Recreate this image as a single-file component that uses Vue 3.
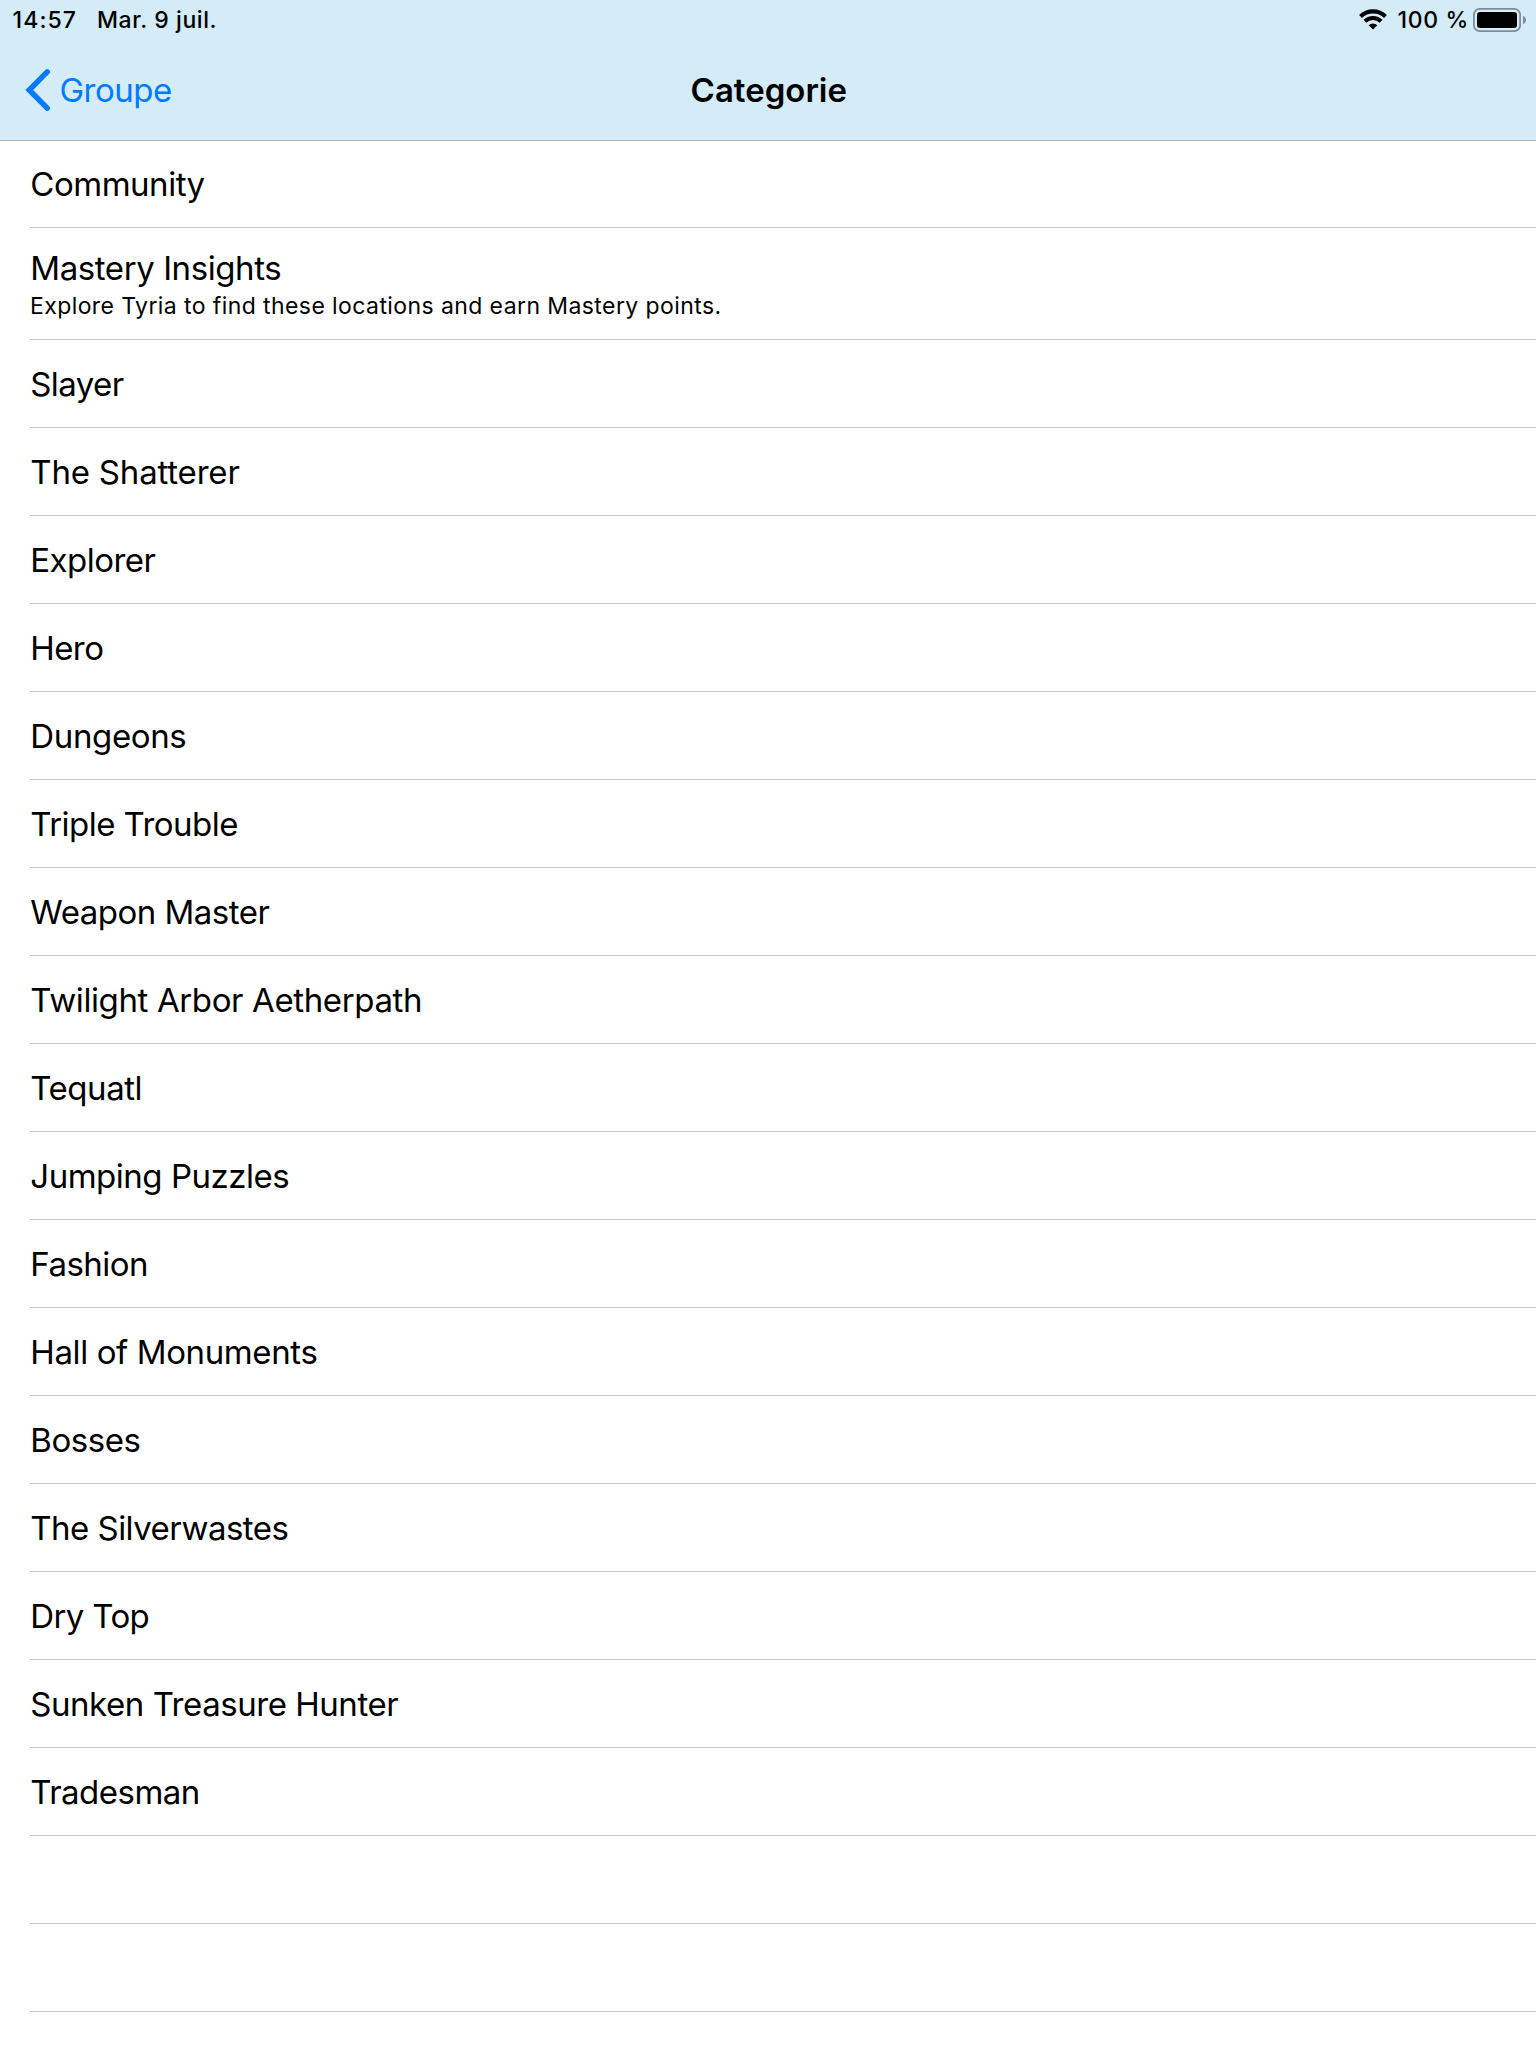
<script setup>
// Each category carries its own optical tracking, in pixels.
const categories = [
  { name: 'Community', tracking: -0.48 },
  {
    name: 'Mastery Insights',
    tracking: -0.42,
    description: 'Explore Tyria to find these locations and earn Mastery points.',
  },
  { name: 'Slayer', tracking: -0.6 },
  { name: 'The Shatterer', tracking: -0.19 },
  { name: 'Explorer', tracking: -0.53 },
  { name: 'Hero', tracking: -0.6 },
  { name: 'Dungeons', tracking: -0.37 },
  { name: 'Triple Trouble', tracking: -0.54 },
  { name: 'Weapon Master', tracking: -0.5 },
  { name: 'Twilight Arbor Aetherpath', tracking: -0.38 },
  { name: 'Tequatl', tracking: -0.45 },
  { name: 'Jumping Puzzles', tracking: -0.48 },
  { name: 'Fashion', tracking: -0.53 },
  { name: 'Hall of Monuments', tracking: -0.39 },
  { name: 'Bosses', tracking: -0.47 },
  { name: 'The Silverwastes', tracking: -0.53 },
  { name: 'Dry Top', tracking: -0.63 },
  { name: 'Sunken Treasure Hunter', tracking: -0.46 },
  { name: 'Tradesman', tracking: -0.52 },
]
const emptyRows = 2
</script>

<template>
  <div class="screen">
    <header class="header">
      <div class="status">
        <span class="time">14:57</span>
        <span class="date">Mar. 9 juil.</span>
        <svg class="wifi" width="28" height="21" viewBox="0 0 28 21" aria-hidden="true">
          <g fill="none" stroke="#000" stroke-width="4.1">
            <path d="M1.5 7.4a18 18 0 0 1 25 0" />
            <path d="M5.9 12.300a11.7 11.7 0 0 1 16.2 0" />
          </g>
          <path d="M14 20.600l-4.300-4.400a6 6 0 0 1 8.600 0z" fill="#000" />
        </svg>
        <span class="percent">100 %</span>
        <svg class="battery" width="54" height="24" viewBox="0 0 54 24" aria-hidden="true">
          <rect x="0.9" y="0.9" width="46.2" height="22.2" rx="5.6" fill="none" stroke="#7f8d95" stroke-width="1.8" />
          <rect x="4" y="4" width="40" height="16" rx="3" fill="#000" />
          <path d="M50 8c1.8.6 3 2.1 3 4s-1.2 3.4-3 4z" fill="#7f8d95" />
        </svg>
      </div>
      <nav class="nav">
        <a class="back">
          <svg class="chevron" width="27" height="44" viewBox="0 0 27 44" aria-hidden="true">
            <path d="M22.2 3.9L4.2 22l18 18.1" fill="none" stroke="#007aff" stroke-width="5.5" stroke-linecap="round" />
          </svg>
          <span class="back-label">Groupe</span>
        </a>
        <h1 class="title">Categorie</h1>
      </nav>
    </header>
    <ul class="list">
      <li v-for="c in categories" :key="c.name" class="row" :class="{ detailed: c.description }">
        <div class="name" :style="{ letterSpacing: c.tracking + 'px' }">{{ c.name }}</div>
        <div v-if="c.description" class="description">{{ c.description }}</div>
      </li>
      <li v-for="n in emptyRows" :key="n" class="row"></li>
    </ul>
  </div>
</template>

<style>
body {
  margin: 0;
  background: #fff;
}
</style>

<style scoped>
.screen {
  width: 1536px;
  height: 2048px;
  overflow: hidden;
  background: #fff;
  color: #000;
  font-family: Inter, "Liberation Sans", sans-serif;
}
.header {
  box-sizing: border-box;
  height: 141px;
  border-bottom: 1px solid #b0b2b4;
  background: #d4ebf8;
}
.status {
  display: flex;
  align-items: flex-start;
  box-sizing: border-box;
  height: 40px;
  padding: 6px 9px 0 12.6px;
  font-size: 23px;
  font-weight: 500;
  line-height: 28px;
  white-space: nowrap;
}
.time {
  width: 84.4px;
  letter-spacing: 1.1px;
}
.date {
  letter-spacing: 0.58px;
}
.wifi {
  margin: 3px 10.5px 0 auto;
}
.percent {
  width: 75.5px;
  letter-spacing: 0.65px;
}
.battery {
  margin-top: 2px;
}
.nav {
  display: grid;
  grid-template-columns: 1fr auto 1fr;
  align-items: center;
  height: 100px;
}
.back {
  display: flex;
  align-items: center;
  padding-left: 25px;
  color: #007aff;
}
.back-label {
  margin-left: 7.5px;
  font-size: 33px;
  line-height: 40px;
  letter-spacing: -0.5px;
}
.title {
  margin: 0;
  padding-left: 1.6px;
  font-size: 33px;
  font-weight: 580;
  line-height: 40px;
  letter-spacing: 0;
}
.list {
  margin: 0;
  padding: 0 0 0 30px;
  list-style: none;
}
.row {
  box-sizing: border-box;
  height: 88px;
  padding-top: 24px;
  border-bottom: 1px solid #c8c8ca;
}
.row:first-child {
  height: 87px;
  padding-top: 23px;
}
.row.detailed {
  height: 112px;
  padding-top: 20px;
}
.name {
  padding-left: 0.3px;
  font-size: 33px;
  line-height: 40px;
}
.description {
  margin-top: 4px;
  font-size: 23px;
  line-height: 28px;
  letter-spacing: 0.41px;
}
</style>
